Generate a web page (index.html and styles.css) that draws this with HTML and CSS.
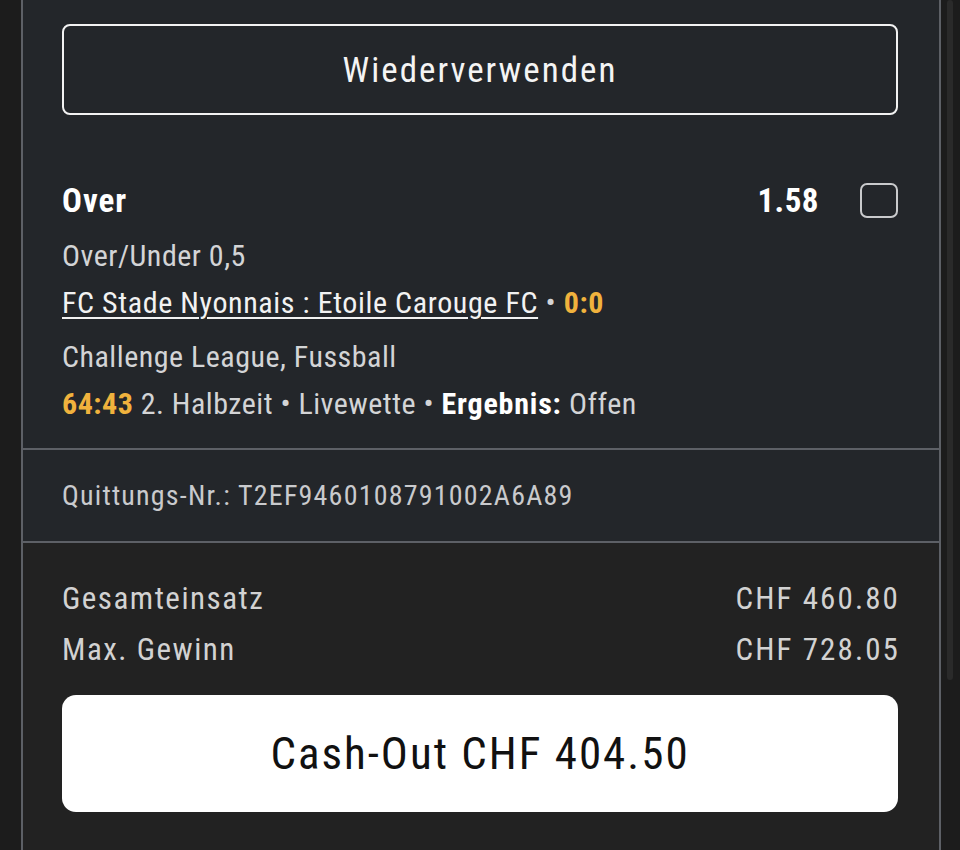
FILE: index.html
```html
<!DOCTYPE html>
<html lang="de">
<head>
    <meta charset="UTF-8">
    <meta name="viewport" content="width=device-width, initial-scale=1.0">
    <title>Wettschein</title>
    <link rel="stylesheet" href="styles.css">
</head>
<body>
    <div class="panel">
        <div class="bet">
            <button class="btn-outline">Wiederverwenden</button>
            <div class="selection">
                <div class="sel-head">
                    <span class="sel-name">Over</span>
                    <span class="sel-odds">1.58</span>
                    <span class="checkbox"></span>
                </div>
                <p class="line">Over/Under 0,5</p>
                <p class="line line-link"><a href="#" class="match">FC Stade Nyonnais : Etoile Carouge FC</a> • <span class="accent">0:0</span></p>
                <p class="line">Challenge League, Fussball</p>
                <p class="line"><span class="accent">64:43</span> 2. Halbzeit • Livewette • <strong>Ergebnis:</strong> Offen</p>
            </div>
        </div>
        <div class="receipt">Quittungs-Nr.: T2EF9460108791002A6A89</div>
        <div class="summary">
            <div class="row"><span>Gesamteinsatz</span><span class="amount">CHF 460.80</span></div>
            <div class="row"><span>Max. Gewinn</span><span class="amount">CHF 728.05</span></div>
            <button class="btn-cashout">Cash-Out CHF 404.50</button>
        </div>
    </div>
    <div class="scroll-thumb"></div>
</body>
</html>
```
FILE: styles.css
```css
* {
    margin: 0;
    padding: 0;
    box-sizing: border-box;
}

body {
    background-color: #1c1c1c;
    font-family: "Roboto Condensed", Roboto, sans-serif;
    color: #d6d7d9;
    height: 850px;
    overflow: hidden;
}

.panel {
    margin-left: 21px;
    width: 920px;
    height: 850px;
    border-left: 2px solid #5d6066;
    border-right: 2px solid #5d6066;
    background-color: #222222;
}

.bet {
    background-color: #23262a;
    padding: 24px 41px 0 39px;
    border-bottom: 2px solid #5d6066;
}

.btn-outline {
    display: block;
    width: 100%;
    height: 91px;
    background: transparent;
    border: 2px solid #f2f2f2;
    border-radius: 8px;
    color: #f4f4f4;
    font-family: inherit;
    font-size: 35px;
    letter-spacing: 2px;
    padding-top: 2px;
}

.selection {
    padding: 68px 0 21px;
}

.sel-head {
    display: flex;
    align-items: center;
    height: 34px;
    margin-bottom: 15px;
}

.sel-name {
    flex: 1;
    font-size: 33px;
    font-weight: bold;
    color: #fff;
    letter-spacing: 1px;
}

.sel-odds {
    font-size: 33px;
    font-weight: bold;
    color: #fff;
    letter-spacing: 0.5px;
    margin-right: 41px;
}

.checkbox {
    width: 38px;
    height: 35px;
    border: 2px solid #c9cacc;
    border-radius: 7px;
}

.line {
    font-size: 30px;
    line-height: 47px;
    letter-spacing: 0.5px;
    color: #d3d4d6;
}

.line-link {
    padding-bottom: 7px;
    letter-spacing: 0.6px;
}

.match {
    color: #f2f2f2;
    text-decoration: underline;
    text-decoration-thickness: 2px;
    text-underline-offset: 4px;
}

.accent {
    color: #f0b23d;
    font-weight: bold;
}

.line strong {
    color: #fff;
    letter-spacing: 0.8px;
}

.receipt {
    background-color: #23262a;
    height: 93px;
    display: flex;
    align-items: center;
    padding: 0 41px 0 39px;
    font-size: 28px;
    color: #c9cacd;
    letter-spacing: 1.2px;
    border-bottom: 2px solid #5d6066;
}

.summary {
    padding: 30px 41px 0 39px;
}

.row {
    display: flex;
    justify-content: space-between;
    font-size: 31px;
    line-height: 51px;
    letter-spacing: 1.5px;
    color: #d2d2d2;
}

.amount {
    letter-spacing: 2.1px;
    margin-right: -2px;
}

.btn-cashout {
    display: block;
    width: 100%;
    height: 117px;
    margin-top: 20px;
    background-color: #fff;
    border: none;
    border-radius: 14px;
    color: #111;
    font-family: inherit;
    font-size: 45px;
    letter-spacing: 2px;
}

.scroll-thumb {
    position: absolute;
    top: 0;
    left: 947px;
    width: 6px;
    height: 680px;
    border-radius: 3px;
    background-color: #2a2a2a;
}
```
